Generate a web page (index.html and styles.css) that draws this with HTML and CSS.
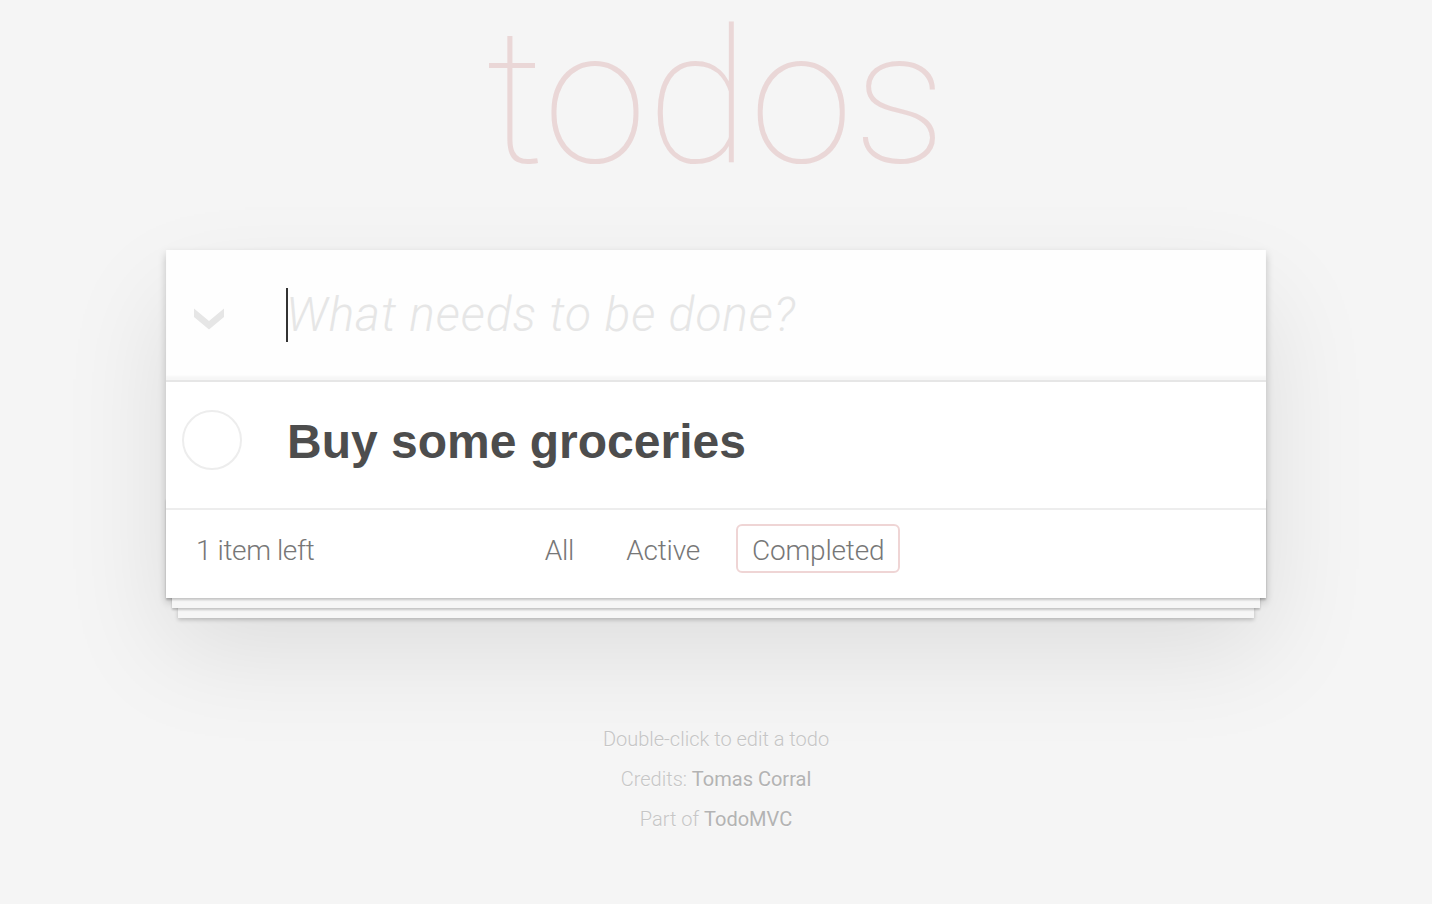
FILE: index.html
```html
<!DOCTYPE html>
<html lang="en">
<head>
<meta charset="utf-8">
<title>TodoMVC</title>
<link rel="stylesheet" href="styles.css">
</head>
<body>
<div class="page">
  <header class="header">
    <h1 class="title">todos</h1>
  </header>
  <section class="todoapp">
    <div class="new-row">
      <label class="toggle-all" for="toggle-all">
        <svg class="chevron" viewBox="0 0 30 22" width="30" height="22" aria-hidden="true">
          <polygon points="0,0.5 15,13 30,0.5 30,9 15,21.5 0,9" fill="#e6e6e6"/>
        </svg>
      </label>
      <div class="new-field">
        <input class="new-todo" placeholder="What needs to be done?" autofocus>
        <span class="caret"></span>
      </div>
    </div>
    <ul class="todo-list">
      <li class="todo">
        <span class="check"></span>
        <label class="todo-label">Buy some groceries</label>
      </li>
    </ul>
    <footer class="footer">
      <span class="count">1 item left</span>
      <ul class="filters">
        <li><a class="filter" href="#/">All</a></li>
        <li><a class="filter" href="#/active">Active</a></li>
        <li><a class="filter selected" href="#/completed">Completed</a></li>
      </ul>
      <span class="spacer"></span>
    </footer>
  </section>
  <footer class="info">
    <p>Double-click to edit a todo</p>
    <p>Credits: <a href="#">Tomas Corral</a></p>
    <p>Part of <a href="#">TodoMVC</a></p>
  </footer>
</div>
</body>
</html>
```
FILE: styles.css
```css
html, body {
  margin: 0;
  padding: 0;
}

body {
  background: #f5f5f5;
  color: #4d4d4d;
  font-family: "Liberation Sans", Arial, sans-serif;
  font-size: 28px;
}

.page {
  max-width: 1100px;
  margin: 0 auto;
}

.header {
  margin: 0;
}

.title {
  margin: 0 0 54px;
  font-family: Roboto, "Liberation Sans", sans-serif;
  font-weight: 100;
  font-size: 188px;
  line-height: 196px;
  text-align: center;
  color: rgba(175, 47, 47, 0.15);
}

.todoapp {
  position: relative;
  background: #fff;
  box-shadow: 0 4px 8px 0 rgba(0, 0, 0, 0.2), 0 50px 100px 0 rgba(0, 0, 0, 0.1);
}

.new-row {
  display: flex;
  align-items: stretch;
  height: 130px;
  background: rgba(0, 0, 0, 0.003);
  box-shadow: inset 0 -4px 2px rgba(0, 0, 0, 0.03);
}

.toggle-all {
  width: 120px;
  flex: none;
  display: flex;
  align-items: center;
  justify-content: flex-start;
  padding: 8px 0 0 28px;
  box-sizing: border-box;
}

.chevron {
  display: block;
}

.new-field {
  position: relative;
  flex: 1;
  display: flex;
}

.new-todo {
  flex: 1;
  border: none;
  outline: none;
  background: transparent;
  padding: 0 32px 0 0;
  margin: 0;
  font-family: "Liberation Sans", Arial, sans-serif;
  font-size: 48px;
  line-height: 66px;
  color: #4d4d4d;
  caret-color: transparent;
}

.new-todo::placeholder {
  font-style: italic;
  font-family: Roboto, "Liberation Sans", sans-serif;
  font-weight: 300;
  letter-spacing: 0.9px;
  color: #e6e6e6;
}

.caret {
  position: absolute;
  left: 0;
  top: 38px;
  width: 2px;
  height: 54px;
  background: #333;
  pointer-events: none;
}

.todo-list {
  list-style: none;
  margin: 0;
  padding: 0;
  border-top: 2px solid #e6e6e6;
}

.todo {
  display: flex;
  align-items: flex-start;
  border-bottom: 2px solid #ededed;
}

.check {
  flex: none;
  width: 60px;
  height: 60px;
  box-sizing: border-box;
  border: 2px solid #ededed;
  border-radius: 50%;
  margin: 28px 0 0 16px;
}

.todo-label {
  padding: 27px 30px 33px 45px;
  font-size: 48px;
  font-weight: bold;
  line-height: 66px;
  color: #4d4d4d;
}

.footer {
  position: relative;
  display: grid;
  grid-template-columns: 1fr auto 1fr;
  align-items: start;
  height: 88px;
  box-sizing: border-box;
  padding: 14px 30px 0 30px;
  color: #777;
  font-family: Roboto, "Liberation Sans", sans-serif;
  font-weight: 300;
  font-size: 28px;
}

.footer::before {
  content: "";
  position: absolute;
  left: 0;
  right: 0;
  bottom: 0;
  height: 100px;
  overflow: hidden;
  pointer-events: none;
  box-shadow: 0 2px 2px rgba(0, 0, 0, 0.2),
    0 16px 0 -6px #f6f6f6,
    0 18px 2px -6px rgba(0, 0, 0, 0.2),
    0 32px 0 -12px #f6f6f6,
    0 34px 4px -12px rgba(0, 0, 0, 0.2);
}

.count {
  padding-top: 8px;
  line-height: 37px;
  letter-spacing: -0.4px;
}

.filters {
  display: flex;
  gap: 20px;
  list-style: none;
  margin: 0 0 0 -3px;
  padding: 0;
}

.filter {
  display: block;
  padding: 6px 14px 2px;
  line-height: 37px;
  border: 2px solid transparent;
  border-radius: 6px;
  color: inherit;
  text-decoration: none;
  letter-spacing: -0.2px;
}

.filter.selected {
  border-color: rgba(175, 47, 47, 0.2);
}

.info {
  margin-top: 131px;
  text-align: center;
  color: #c6c6c6;
  font-family: Roboto, "Liberation Sans", sans-serif;
  font-weight: 300;
  font-size: 20px;
  text-shadow: 0 1px 0 rgba(255, 255, 255, 0.5);
}

.info p {
  margin: 20px 0;
  line-height: 20px;
}

.info a {
  color: #b3b3b3;
  font-weight: 400;
  text-decoration: none;
}
```
